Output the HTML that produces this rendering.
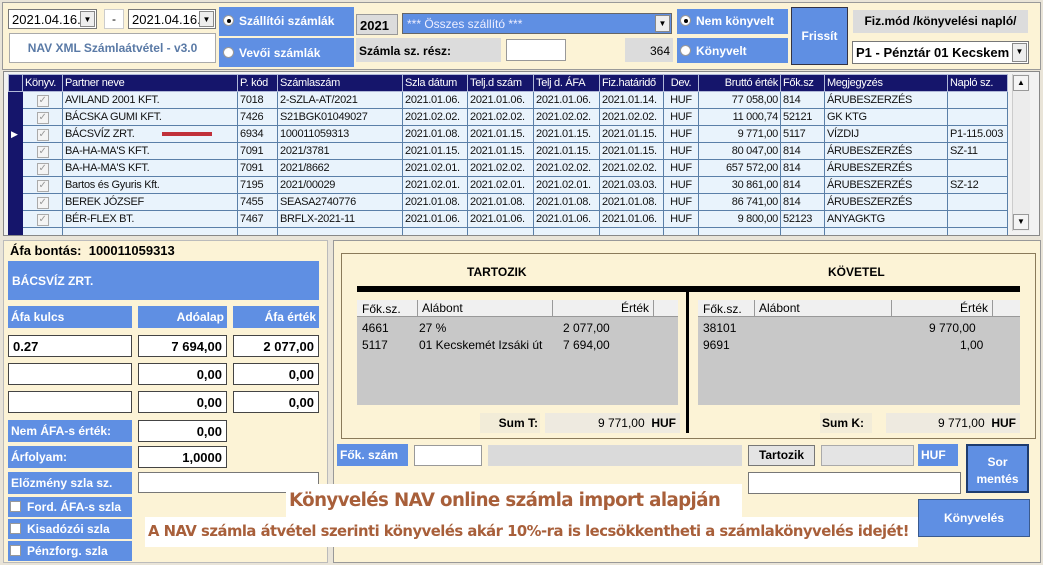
<!DOCTYPE html>
<html><head><meta charset="utf-8"><style>
*{box-sizing:border-box;margin:0;padding:0}
body{width:1043px;height:565px;overflow:hidden;background:#e9e4d8;font-family:"Liberation Sans",sans-serif;font-size:12px;position:relative}
.a{position:absolute}
.bl{background:#5f8fe3;color:#fff;font-weight:bold}
.wh{background:#fff;border:1px solid #777}
.gr{background:#dcdcdc}
.cb{background:#fff;border:1px solid #777;font-size:13px;padding:2px 3px}
.dd{position:absolute;right:1px;top:1px;bottom:1px;width:15px;background:#eee;border:1px solid #888;font-size:8px;text-align:center;line-height:15px;color:#000}
.rad{display:inline-block;width:11px;height:11px;border-radius:50%;background:#fff;border:1px solid #999;margin-right:5px;vertical-align:-1px;position:relative}
.rad.on::after{content:"";position:absolute;left:3px;top:3px;width:4px;height:4px;border-radius:50%;background:#000}
table{border-collapse:collapse;table-layout:fixed}
#g td{height:17px;border:1px solid #5a7fa8;background:#e9f3fc;font-size:11px;letter-spacing:-0.3px;padding:0 2px;white-space:nowrap;overflow:hidden;color:#111}
#g tr.h td{background:#15156b;color:#fff;border-color:#b0b8d8}
#g td.i{background:#15156b;border-color:#15156b}
.ck{display:inline-block;width:12px;height:12px;border:1px solid #aaa;background:#f4f4f4;color:#999;font-size:10px;line-height:10px;text-align:center}
.r{text-align:right}
.c{text-align:center}
.in{position:absolute;background:#fff;border:1px solid #444;font-weight:bold;font-size:13px;padding:3px 4px}
.lb{position:absolute;background:#5f8fe3;color:#fff;font-weight:bold;font-size:12px;padding:4px 3px}
.chk{display:inline-block;width:11px;height:11px;background:#fff;border:1px solid #999;margin-right:6px;vertical-align:-1px}
.lst{position:absolute;background:#c8c8c8;font-size:12px}
.lst .hd{height:17px;background:#f0f0f0;border-bottom:1px solid #999;position:relative}
.lst .hd span{position:absolute;top:2px}
</style></head><body>
<div class="a" style="left:2px;top:2px;width:1039px;height:68px;background:#fcf3d6;border:1px solid #999"></div>
<div class="a cb" style="left:8px;top:9px;width:89px;height:20px">2021.04.16.<div class="dd">▼</div></div>
<div class="a wh" style="left:104px;top:9px;width:20px;height:20px;text-align:center;line-height:18px;border-color:#ccc">-</div>
<div class="a cb" style="left:128px;top:9px;width:88px;height:20px">2021.04.16.<div class="dd">▼</div></div>
<div class="a wh" style="left:9px;top:33px;width:207px;height:30px;color:#5a7aa6;font-weight:bold;text-align:center;line-height:28px;font-size:12px;border-color:#aaa">NAV XML Számlaátvétel - v3.0</div>
<div class="a bl" style="left:219px;top:7px;width:135px;height:29px;padding:7px 4px;font-size:12px"><span class="rad on"></span>Szállítói számlák</div>
<div class="a bl" style="left:219px;top:38px;width:135px;height:29px;padding:8px 4px;font-size:12px"><span class="rad"></span>Vevői számlák</div>
<div class="a gr" style="left:356px;top:14px;width:42px;height:21px;border:1px solid #999;font-weight:bold;font-size:13px;padding:3px 3px">2021</div>
<div class="a" style="left:402px;top:13px;width:270px;height:21px;background:#5f8fe3;border:1px solid #666;color:#eef;padding:3px 4px;font-size:12px">*** Összes szállító ***<div class="dd">▼</div></div>
<div class="a gr" style="left:356px;top:38px;width:145px;height:24px;font-weight:bold;padding:6px 3px;font-size:12px">Számla sz. rész:</div>
<div class="a wh" style="left:506px;top:39px;width:60px;height:22px;border-color:#999"></div>
<div class="a gr" style="left:625px;top:38px;width:48px;height:24px;text-align:right;padding:6px 3px">364</div>
<div class="a bl" style="left:677px;top:9px;width:111px;height:25px;padding:5px 3px"><span class="rad on"></span>Nem könyvelt</div>
<div class="a bl" style="left:677px;top:38px;width:111px;height:25px;padding:6px 3px"><span class="rad"></span>Könyvelt</div>
<div class="a bl" style="left:791px;top:7px;width:57px;height:58px;border:1px solid #334;text-align:center;line-height:56px">Frissít</div>
<div class="a gr" style="left:853px;top:10px;width:175px;height:23px;font-weight:bold;text-align:center;line-height:23px;font-size:12px">Fiz.mód /könyvelési napló/</div>
<div class="a cb" style="left:852px;top:41px;width:177px;height:23px;font-weight:bold;font-size:13px;padding:3px 3px;white-space:nowrap;overflow:hidden">P1 - Pénztár 01 Kecskem<div class="dd">▼</div></div>

<div class="a" style="left:3px;top:71px;width:1037px;height:165px;background:#f2f2f2;border:1px solid #888;overflow:hidden">
<table id="g" class="a" style="left:4px;top:2px;width:999px">
<colgroup><col style="width:14px"><col style="width:40px"><col style="width:175px"><col style="width:40px"><col style="width:125px"><col style="width:65px"><col style="width:66px"><col style="width:66px"><col style="width:64px"><col style="width:35px"><col style="width:82px"><col style="width:44px"><col style="width:123px"><col style="width:60px"></colgroup>
<tr class="h"><td class="i"></td><td>Könyv.</td><td>Partner neve</td><td>P. kód</td><td>Számlaszám</td><td>Szla dátum</td><td>Telj.d szám</td><td>Telj d. ÁFA</td><td>Fiz.határidő</td><td class="c">Dev.</td><td class="r">Bruttó érték</td><td>Fők.sz</td><td>Megjegyzés</td><td>Napló sz.</td></tr>
<tr><td class="i"></td><td class="c"><span class="ck">✓</span></td><td>AVILAND 2001 KFT.</td><td>7018</td><td>2-SZLA-AT/2021</td><td>2021.01.06.</td><td>2021.01.06.</td><td>2021.01.06.</td><td>2021.01.14.</td><td class="c">HUF</td><td class="r">77 058,00</td><td>814</td><td>ÁRUBESZERZÉS</td><td></td></tr>
<tr><td class="i"></td><td class="c"><span class="ck">✓</span></td><td>BÁCSKA GUMI KFT.</td><td>7426</td><td>S21BGK01049027</td><td>2021.02.02.</td><td>2021.02.02.</td><td>2021.02.02.</td><td>2021.02.02.</td><td class="c">HUF</td><td class="r">11 000,74</td><td>52121</td><td>GK KTG</td><td></td></tr>
<tr><td class="i" style="color:#fff;font-size:9px">▶</td><td class="c"><span class="ck">✓</span></td><td>BÁCSVÍZ ZRT. <span style="display:inline-block;width:50px;height:4px;background:#c0303a;margin-left:25px;vertical-align:middle"></span></td><td>6934</td><td>100011059313</td><td>2021.01.08.</td><td>2021.01.15.</td><td>2021.01.15.</td><td>2021.01.15.</td><td class="c">HUF</td><td class="r">9 771,00</td><td>5117</td><td>VÍZDIJ</td><td>P1-115.003</td></tr>
<tr><td class="i"></td><td class="c"><span class="ck">✓</span></td><td>BA-HA-MA'S KFT.</td><td>7091</td><td>2021/3781</td><td>2021.01.15.</td><td>2021.01.15.</td><td>2021.01.15.</td><td>2021.01.15.</td><td class="c">HUF</td><td class="r">80 047,00</td><td>814</td><td>ÁRUBESZERZÉS</td><td>SZ-11</td></tr>
<tr><td class="i"></td><td class="c"><span class="ck">✓</span></td><td>BA-HA-MA'S KFT.</td><td>7091</td><td>2021/8662</td><td>2021.02.01.</td><td>2021.02.02.</td><td>2021.02.02.</td><td>2021.02.02.</td><td class="c">HUF</td><td class="r">657 572,00</td><td>814</td><td>ÁRUBESZERZÉS</td><td></td></tr>
<tr><td class="i"></td><td class="c"><span class="ck">✓</span></td><td>Bartos és Gyuris Kft.</td><td>7195</td><td>2021/00029</td><td>2021.02.01.</td><td>2021.02.01.</td><td>2021.02.01.</td><td>2021.03.03.</td><td class="c">HUF</td><td class="r">30 861,00</td><td>814</td><td>ÁRUBESZERZÉS</td><td>SZ-12</td></tr>
<tr><td class="i"></td><td class="c"><span class="ck">✓</span></td><td>BEREK JÓZSEF</td><td>7455</td><td>SEASA2740776</td><td>2021.01.08.</td><td>2021.01.08.</td><td>2021.01.08.</td><td>2021.01.08.</td><td class="c">HUF</td><td class="r">86 741,00</td><td>814</td><td>ÁRUBESZERZÉS</td><td></td></tr>
<tr><td class="i"></td><td class="c"><span class="ck">✓</span></td><td>BÉR-FLEX BT.</td><td>7467</td><td>BRFLX-2021-11</td><td>2021.01.06.</td><td>2021.01.06.</td><td>2021.01.06.</td><td>2021.01.06.</td><td class="c">HUF</td><td class="r">9 800,00</td><td>52123</td><td>ANYAGKTG</td><td></td></tr>
<tr><td class="i"></td><td></td><td></td><td></td><td></td><td></td><td></td><td></td><td></td><td></td><td></td><td></td><td></td><td></td></tr>
</table>
<div class="a" style="left:1008px;top:2px;width:18px;height:157px;background:#ececec;border-left:1px solid #ccc"></div>
<div class="a" style="left:1009px;top:3px;width:16px;height:16px;background:#f4f4f4;border:1px solid #999;font-size:8px;text-align:center;line-height:14px">▲</div>
<div class="a" style="left:1009px;top:142px;width:16px;height:16px;background:#f4f4f4;border:1px solid #999;font-size:8px;text-align:center;line-height:14px">▼</div>
</div>

<!-- left panel -->
<div class="a" style="left:3px;top:240px;width:325px;height:323px;background:#fcf3d6;border:1px solid #bbb"></div>
<div class="a" style="left:10px;top:243px;font-weight:bold;font-size:13px">Áfa bontás:&nbsp; 100011059313</div>
<div class="lb" style="left:8px;top:261px;width:311px;height:39px;padding:13px 4px">BÁCSVÍZ ZRT.</div>
<div class="lb" style="left:8px;top:306px;width:124px;height:22px">Áfa kulcs</div>
<div class="lb r" style="left:138px;top:306px;width:89px;height:22px">Adóalap</div>
<div class="lb r" style="left:233px;top:306px;width:86px;height:22px">Áfa érték</div>
<div class="in" style="left:8px;top:335px;width:124px;height:22px">0.27</div>
<div class="in r" style="left:138px;top:335px;width:89px;height:22px">7 694,00</div>
<div class="in r" style="left:233px;top:335px;width:86px;height:22px">2 077,00</div>
<div class="in" style="left:8px;top:363px;width:124px;height:22px"></div>
<div class="in r" style="left:138px;top:363px;width:89px;height:22px">0,00</div>
<div class="in r" style="left:233px;top:363px;width:86px;height:22px">0,00</div>
<div class="in" style="left:8px;top:391px;width:124px;height:22px"></div>
<div class="in r" style="left:138px;top:391px;width:89px;height:22px">0,00</div>
<div class="in r" style="left:233px;top:391px;width:86px;height:22px">0,00</div>
<div class="lb" style="left:8px;top:420px;width:124px;height:22px">Nem ÁFA-s érték:</div>
<div class="in r" style="left:138px;top:420px;width:89px;height:22px">0,00</div>
<div class="lb" style="left:8px;top:446px;width:124px;height:22px">Árfolyam:</div>
<div class="in r" style="left:138px;top:446px;width:89px;height:22px">1,0000</div>
<div class="lb" style="left:8px;top:472px;width:124px;height:22px">Előzmény szla sz.</div>
<div class="in" style="left:138px;top:472px;width:181px;height:21px;border-color:#777"></div>
<div class="lb" style="left:8px;top:497px;width:124px;height:20px;padding:3px 2px"><span class="chk"></span>Ford. ÁFA-s szla</div>
<div class="lb" style="left:8px;top:519px;width:124px;height:20px;padding:3px 2px"><span class="chk"></span>Kisadózói szla</div>
<div class="lb" style="left:8px;top:541px;width:124px;height:20px;padding:3px 2px"><span class="chk"></span>Pénzforg. szla</div>

<!-- right panel -->
<div class="a" style="left:333px;top:240px;width:708px;height:323px;background:#fcf3d6;border:1px solid #999"></div>
<div class="a" style="left:341px;top:253px;width:695px;height:186px;border:1px solid #8a7a5a"></div>
<div class="a" style="left:467px;top:265px;font-weight:bold;font-size:12px">TARTOZIK</div>
<div class="a" style="left:828px;top:265px;font-weight:bold;font-size:12px">KÖVETEL</div>
<div class="a" style="left:357px;top:286px;width:663px;height:6px;background:#000"></div>
<div class="a" style="left:686px;top:292px;width:3px;height:141px;background:#000"></div>
<div class="lst" style="left:357px;top:300px;width:321px;height:105px"><div class="hd"><span style="left:5px">Fők.sz.</span><span style="left:60px;border-left:1px solid #999;padding-left:4px;top:0;height:17px;line-height:17px">Alábont</span><span style="left:195px;width:102px;border-left:1px solid #999;border-right:1px solid #999;text-align:right;padding-right:4px;top:0;height:17px;line-height:17px">Érték</span></div>
<div class="a" style="left:5px;top:21px">4661</div><div class="a" style="left:62px;top:21px">27 %</div><div class="a" style="left:206px;top:21px">2 077,00</div>
<div class="a" style="left:5px;top:38px">5117</div><div class="a" style="left:62px;top:38px">01 Kecskemét Izsáki út</div><div class="a" style="left:206px;top:38px">7 694,00</div></div>
<div class="lst" style="left:698px;top:300px;width:322px;height:105px"><div class="hd"><span style="left:5px">Fők.sz.</span><span style="left:56px;border-left:1px solid #999;padding-left:4px;top:0;height:17px;line-height:17px">Alábont</span><span style="left:193px;width:102px;border-left:1px solid #999;border-right:1px solid #999;text-align:right;padding-right:4px;top:0;height:17px;line-height:17px">Érték</span></div>
<div class="a" style="left:5px;top:21px">38101</div><div class="a" style="left:231px;top:21px">9 770,00</div>
<div class="a" style="left:5px;top:38px">9691</div><div class="a" style="left:262px;top:38px">1,00</div></div>
<div class="a" style="left:480px;top:413px;width:60px;height:20px;background:#f2ecd8;font-weight:bold;padding:3px 2px;text-align:right">Sum T:</div>
<div class="a" style="left:545px;top:413px;width:135px;height:20px;background:#eeeae0;padding:3px 4px;text-align:right">9 771,00&nbsp; <b>HUF</b></div>
<div class="a" style="left:820px;top:413px;width:52px;height:20px;background:#f2ecd8;font-weight:bold;padding:3px 2px">Sum K:</div>
<div class="a" style="left:886px;top:413px;width:134px;height:20px;background:#eeeae0;padding:3px 4px;text-align:right">9 771,00&nbsp; <b>HUF</b></div>
<div class="lb" style="left:337px;top:444px;width:71px;height:22px">Fők. szám</div>
<div class="a wh" style="left:414px;top:445px;width:68px;height:21px;border-color:#999"></div>
<div class="a" style="left:488px;top:445px;width:254px;height:21px;background:#dadada"></div>
<div class="a" style="left:748px;top:445px;width:67px;height:21px;background:#e4e4e4;border:1px solid #777;font-weight:bold;text-align:center;line-height:19px">Tartozik</div>
<div class="a" style="left:821px;top:445px;width:93px;height:21px;background:#e4e4e4;border:1px solid #aaa"></div>
<div class="lb" style="left:918px;top:444px;width:40px;height:22px">HUF</div>
<div class="a bl" style="left:966px;top:444px;width:63px;height:49px;border:2px solid #1e3c6e;text-align:center;padding-top:8px;line-height:17px">Sor<br>mentés</div>
<div class="a wh" style="left:748px;top:472px;width:213px;height:22px"></div>
<div class="a bl" style="left:918px;top:499px;width:112px;height:38px;border:1px solid #3a5a8e;text-align:center;line-height:36px">Könyvelés</div>

<!-- overlay -->
<div class="a" style="left:286px;top:484px;width:456px;height:34px;background:#fff;color:#a85f3a;font-weight:bold;font-size:18.2px;line-height:34px;padding-left:3px;font-family:'DejaVu Sans',sans-serif;white-space:nowrap;letter-spacing:-0.6px">Könyvelés NAV online számla import alapján</div>
<div class="a" style="left:145px;top:517px;width:773px;height:30px;background:#fff;color:#a85f3a;font-weight:bold;font-size:14.8px;line-height:30px;padding-left:3px;font-family:'DejaVu Sans',sans-serif;white-space:nowrap;letter-spacing:-0.5px;overflow:hidden">A NAV számla átvétel szerinti könyvelés akár 10%-ra is lecsökkentheti a számlakönyvelés idejét!</div>
</body></html>
